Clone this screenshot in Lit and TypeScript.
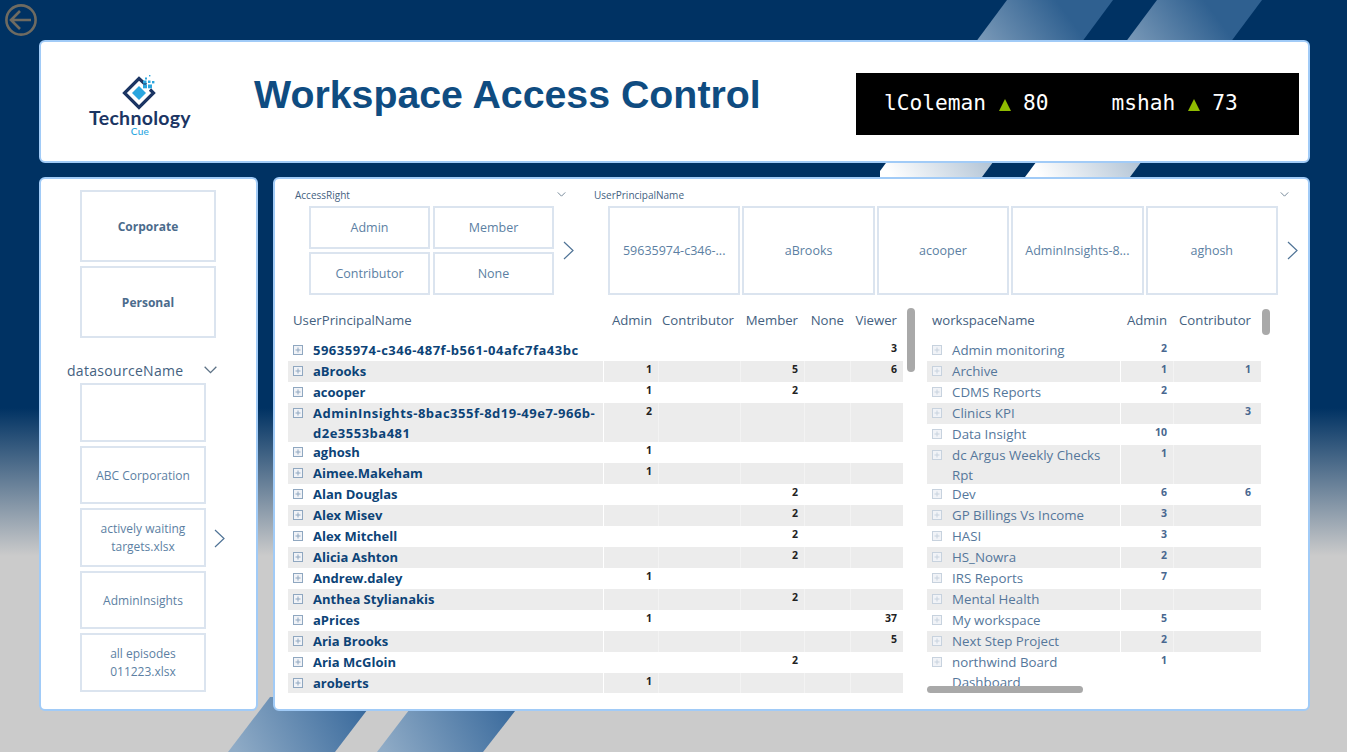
import { LitElement, html, css, svg } from "lit";
import { customElement } from "lit/decorators.js";

type Row = { name: string; vals: string[]; h?: number; hex?: boolean };

const USERS: Row[] = [
  { name: "59635974-c346-487f-b561-04afc7fa43bc", vals: ["", "", "", "", "3"], hex: true },
  { name: "aBrooks", vals: ["1", "", "5", "", "6"] },
  { name: "acooper", vals: ["1", "", "2", "", ""] },
  { name: "AdminInsights-8bac355f-8d19-49e7-966b-d2e3553ba481", vals: ["2", "", "", "", ""], h: 39, hex: true },
  { name: "aghosh", vals: ["1", "", "", "", ""] },
  { name: "Aimee.Makeham", vals: ["1", "", "", "", ""] },
  { name: "Alan Douglas", vals: ["", "", "2", "", ""] },
  { name: "Alex Misev", vals: ["", "", "2", "", ""] },
  { name: "Alex Mitchell", vals: ["", "", "2", "", ""] },
  { name: "Alicia Ashton", vals: ["", "", "2", "", ""] },
  { name: "Andrew.daley", vals: ["1", "", "", "", ""] },
  { name: "Anthea Stylianakis", vals: ["", "", "2", "", ""] },
  { name: "aPrices", vals: ["1", "", "", "", "37"] },
  { name: "Aria Brooks", vals: ["", "", "", "", "5"] },
  { name: "Aria McGloin", vals: ["", "", "2", "", ""] },
  { name: "aroberts", vals: ["1", "", "", "", ""] },
];

const WORKSPACES: Row[] = [
  { name: "Admin monitoring", vals: ["2", ""] },
  { name: "Archive", vals: ["1", "1"] },
  { name: "CDMS Reports", vals: ["2", ""] },
  { name: "Clinics KPI", vals: ["", "3"] },
  { name: "Data Insight", vals: ["10", ""] },
  { name: "dc Argus Weekly Checks Rpt", vals: ["1", ""], h: 39 },
  { name: "Dev", vals: ["6", "6"] },
  { name: "GP Billings Vs Income", vals: ["3", ""] },
  { name: "HASI", vals: ["3", ""] },
  { name: "HS_Nowra", vals: ["2", ""] },
  { name: "IRS Reports", vals: ["7", ""] },
  { name: "Mental Health", vals: ["", ""] },
  { name: "My workspace", vals: ["5", ""] },
  { name: "Next Step Project", vals: ["2", ""] },
  { name: "northwind Board Dashboard", vals: ["1", ""], h: 39 },
];

const chevronDown = (w: number) => html`<svg class="chev" width=${w} height=${Math.round(w * 0.6)} viewBox="0 0 10 6"><path d="M0.5 0.5 L5 5 L9.5 0.5" fill="none" stroke="#5d7286" stroke-width="1"/></svg>`;
const chevronRight = html`<svg class="next" width="11" height="19" viewBox="0 0 11 19"><path d="M1 1 L10 9.5 L1 18" fill="none" stroke="#4f7396" stroke-width="1.2"/></svg>`;
const plusBox = html`<svg class="plus" width="10" height="10" viewBox="0 0 10 10"><rect x="0.5" y="0.5" width="9" height="9" fill="#f1f3f7" stroke="currentColor"/><path d="M2.5 5H7.5M5 2.5V7.5" stroke="currentColor"/></svg>`;

@customElement("app-root")
export class AppRoot extends LitElement {
  static styles = css`
    :host {
      display: block;
      position: relative;
      width: 1347px;
      height: 752px;
      overflow: hidden;
      font-family: "Open Sans", "Noto Sans", sans-serif;
      background: linear-gradient(180deg, #003263 0, #003263 408px, #cbcbcb 556px, #cbcbcb 100%);
    }
    .bg { position: absolute; left: 0; top: 0; }
    .back { position: absolute; left: 5px; top: 4px; }
    .page {
      position: relative;
      box-sizing: border-box;
      height: 752px;
      padding: 40px 37px 0 39px;
      display: grid;
      grid-template-columns: 219px 1037px;
      grid-template-rows: 123px 534px;
      column-gap: 15px;
      row-gap: 14px;
    }
    .panel {
      box-sizing: border-box;
      background: #fff;
      border: 2px solid #a1cbf7;
      border-radius: 6px;
    }
    .header {
      grid-column: 1 / 3;
      display: flex;
      align-items: flex-start;
    }
    .logo {
      width: 198px;
      margin-top: 34px;
      display: flex;
      flex-direction: column;
      align-items: center;
      flex: none;
    }
    .logo svg { display: block; margin-left: 2px; overflow: visible; }
    .logo .t1 {
      font: 700 19.5px/17px Lato, sans-serif;
      color: #1b3563;
      letter-spacing: 0.3px;
      margin-top: -1px;
    }
    .logo .t2 {
      font: 500 10px/10px Lato, sans-serif;
      color: #2aa6df;
      letter-spacing: 0.3px;
    }
    h1 {
      margin: 27px 0 0 15px;
      width: 602px;
      flex: none;
      font: 700 39.3px/50px "Liberation Sans", Arial, sans-serif;
      color: #0f4c81;
      white-space: nowrap;
    }
    .ticker {
      box-sizing: border-box;
      width: 443px;
      height: 62px;
      margin-top: 31px;
      padding: 0 0 2px 28px;
      background: #000;
      color: #fff;
      font: 21.2px/58px "DejaVu Sans Mono", monospace;
      white-space: pre;
      display: flex;
      align-items: center;
    }
    .up {
      width: 0;
      height: 0;
      margin: 3px 12px 0 13px;
      border-left: 6.5px solid transparent;
      border-right: 6.5px solid transparent;
      border-bottom: 12px solid #8fbb00;
    }
    .ticker .gap { width: 63px; }

    .tile {
      box-sizing: border-box;
      border: 2px solid #dbe4ef;
      display: flex;
      align-items: center;
      justify-content: center;
      text-align: center;
      font-size: 12.5px;
      line-height: 17px;
      color: #5c7fa3;
      overflow: hidden;
    }

    .side {
      display: flex;
      flex-direction: column;
      padding: 11px 0 0 39px;
    }
    .side .big {
      width: 136px;
      height: 72px;
      margin-bottom: 4px;
      font-weight: 700;
      font-size: 12px;
      color: #4b6b8c;
    }
    .side .label {
      display: flex;
      align-items: center;
      justify-content: space-between;
      width: 150px;
      margin: 18px 0 0 -13px;
      height: 20px;
      font-size: 14px;
      letter-spacing: 0.3px;
      color: #44617f;
    }
    .side .listwrap { display: flex; align-items: center; margin-top: 3px; }
    .side .list { display: flex; flex-direction: column; gap: 4px; }
    .side .list .tile {
      width: 126px;
      height: 58.5px;
      padding: 2px 8px 0;
      font-size: 12px;
      line-height: 18px;
    }
    .side .next { margin-left: 8px; margin-top: 2px; }

    .main { padding: 8px 0 0 0; display: flex; flex-direction: column; }
    .slicers { display: flex; height: 112px; flex: none; }
    .slicer-a { width: 319px; flex: none; padding-left: 20px; box-sizing: border-box; }
    .slicer-b { flex: none; width: 714px; }
    .slab {
      display: flex;
      align-items: center;
      justify-content: space-between;
      height: 15px;
      font-size: 10px;
      color: #44617f;
    }
    .slicer-a .slab { width: 271px; }
    .slicer-b .slab { width: 695px; }
    .srow { display: flex; align-items: center; }
    .grid4 {
      display: grid;
      grid-template-columns: 121px 121px;
      grid-template-rows: 43px 43px;
      gap: 3px 3px;
      margin: 4px 0 0 14px;
    }
    .grid5 { display: flex; gap: 2px; margin: 4px 0 0 14px; }
    .grid5 .tile { width: 132.4px; height: 89px; white-space: nowrap; }
    .srow .next { flex: none; margin: 4px 0 0 9px; }

    .tables { position: relative; display: flex; margin-top: 1px; }
    .tbl { position: relative; flex: none; }
    .tbl.users { width: 615px; margin-left: 13px; }
    .tbl.spaces { width: 334px; margin-left: 24px; }
    .thead {
      height: 40px;
      display: grid;
      align-items: start;
      font-size: 13.2px;
      line-height: 17px;
      color: #44617f;
      padding-top: 12px;
      box-sizing: border-box;
    }
    .thead > div { white-space: nowrap; text-align: right; padding-right: 6px; }
    .thead > div:first-child { text-align: left; padding-left: 5px; padding-right: 0; }
    .spaces .thead > div:last-child { padding-right: 0; }
    .body { overflow: hidden; }
    .row { display: grid; height: 21px; }
    .row.tall { height: 39px; }
    .row:nth-child(even) { background: #ececec; }
    .row:nth-child(even) .n { box-shadow: inset 1px 0 0 #f3f3f3; }
    .row:nth-child(even) .cell + .n { box-shadow: inset 1px 0 0 #fff; }
    .users .body { height: 353px; }
    .spaces .body { height: 346px; }
    .users .thead, .users .row { grid-template-columns: 315px 55px 82px 64px 46px 53px; }
    .spaces .thead, .spaces .row { grid-template-columns: 193px 53px 84px 4px; }
    .cell {
      display: flex;
      align-items: flex-start;
      padding: 0 0 0 5px;
      line-height: 19.5px;
      overflow: hidden;
    }
    .cell span { padding-top: 1px; }
    .cell .plus { flex: none; margin: 5px 10px 0 0; }
    .users .cell { font-size: 13px; font-weight: 700; color: #0c4377; }
    .users .cell.hex { letter-spacing: 0.5px; }
    .users .cell .plus { color: #8fa7c0; }
    .spaces .cell { font-size: 13.3px; color: #55779b; }
    .spaces .cell .plus { color: #c7d2de; }
    .n {
      text-align: right;
      font-size: 10.5px;
      font-weight: 700;
      line-height: 16px;
      padding-right: 6px;
      white-space: nowrap;
    }
    .users .n { color: #222; }
    .spaces .n { color: #48678f; }
    .sb {
      position: absolute;
      background: #a9a9a9;
      border-radius: 4px;
    }
    .sb.u { left: 632px; top: 8px; width: 8px; height: 64px; }
    .sb.s { left: 335px; top: 9px; width: 8px; height: 26px; }
    .sb.h { left: 0; top: 386px; width: 156px; height: 7px; }
  `;

  private stripe(id: string, pts: string) {
    return svg`<polygon points=${pts} fill="url(#${id})"/>`;
  }

  private table(cls: string, title: string, heads: string[], rows: Row[]) {
    return html`<div class="tbl ${cls}">
      <div class="thead">
        <div>${title}</div>
        ${heads.map((h) => html`<div>${h}</div>`)}
        ${cls === "spaces" ? html`<div></div>` : ""}
      </div>
      <div class="body">
        ${rows.map(
          (r) => html`<div class="row ${r.h ? "tall" : ""}">
            <div class="cell ${r.hex ? "hex" : ""}">${plusBox}<span>${r.name}</span></div>
            ${r.vals.map((v) => html`<div class="n">${v}</div>`)}
            ${cls === "spaces" ? html`<div></div>` : ""}
          </div>`
        )}
      </div>
      ${cls === "spaces" ? html`<div class="sb s"></div><div class="sb h"></div>` : ""}
    </div>`;
  }

  render() {
    return html`
      <svg class="bg" width="1347" height="752" viewBox="0 0 1347 752">
        <defs>
          <linearGradient id="g1" gradientUnits="userSpaceOnUse" x1="1085" y1="39" x2="895" y2="181">
            <stop offset="0" stop-color="#2f6090"/><stop offset="1" stop-color="#ffffff"/>
          </linearGradient>
          <linearGradient id="g2" gradientUnits="userSpaceOnUse" x1="1233" y1="39" x2="1043" y2="181">
            <stop offset="0" stop-color="#2f6090"/><stop offset="1" stop-color="#ffffff"/>
          </linearGradient>
          <linearGradient id="g3" gradientUnits="userSpaceOnUse" x1="365" y1="700" x2="240" y2="760">
            <stop offset="0" stop-color="#37689b"/><stop offset="1" stop-color="#8fabc6"/>
          </linearGradient>
          <linearGradient id="g4" gradientUnits="userSpaceOnUse" x1="513" y1="700" x2="388" y2="760">
            <stop offset="0" stop-color="#37689b"/><stop offset="1" stop-color="#8fabc6"/>
          </linearGradient>
        </defs>
        ${this.stripe("g1", "1007,0 1113,0 982,177 880,177 880,171")}
        ${this.stripe("g2", "1157,0 1262,0 1130,177 1025,177")}
        ${this.stripe("g3", "270,697 377,697 335,752 228,752")}
        ${this.stripe("g4", "419,697 526,697 483,752 377,752")}
      </svg>
      <svg class="back" width="32" height="32" viewBox="0 0 32 32">
        <circle cx="16" cy="16" r="14.6" fill="none" stroke="#6f6b61" stroke-width="2.6"/>
        <path d="M26 16H6M15 7L6 16L15 25" fill="none" stroke="#6f6b61" stroke-width="2.6"/>
      </svg>
      <div class="page">
        <div class="panel header">
          <div class="logo">
            <svg width="44" height="34" viewBox="0 0 44 34">
              <path d="M27 9 L20 2.5 L5.5 17 L20 31.5 L34.5 17 L31 13.5" fill="none" stroke="#1b3563" stroke-width="3.2"/>
              <path d="M20 10 L27 17 L20 24 L13 17 Z" fill="#2aa6df"/>
              <g fill="#2aa6df">
                <rect x="24" y="8.5" width="4" height="3.8"/><rect x="29" y="8.5" width="4" height="3.8"/>
                <rect x="24" y="4.5" width="3.5" height="3"/><rect x="29" y="4.5" width="2.5" height="2.5"/>
                <rect x="33" y="5" width="2.4" height="2.4"/><rect x="26" y="1.5" width="2" height="2"/>
                <rect x="30" y="-1" width="1.4" height="1.4"/>
              </g>
            </svg>
            <div class="t1">Technology</div>
            <div class="t2">Cue</div>
          </div>
          <h1>Workspace Access Control</h1>
          <div class="ticker">
            <span>lColeman</span><i class="up"></i><span>80</span><span class="gap"></span>
            <span>mshah</span><i class="up"></i><span>73</span>
          </div>
        </div>
        <div class="panel side">
          <div class="tile big">Corporate</div>
          <div class="tile big">Personal</div>
          <div class="label"><span>datasourceName</span>${chevronDown(13)}</div>
          <div class="listwrap">
            <div class="list">
              <div class="tile"></div>
              <div class="tile">ABC Corporation</div>
              <div class="tile">actively waiting targets.xlsx</div>
              <div class="tile">AdminInsights</div>
              <div class="tile">all episodes 011223.xlsx</div>
            </div>
            ${chevronRight}
          </div>
        </div>
        <div class="panel main">
          <div class="slicers">
            <div class="slicer-a">
              <div class="slab"><span>AccessRight</span>${chevronDown(9)}</div>
              <div class="srow">
                <div class="grid4">
                  <div class="tile">Admin</div><div class="tile">Member</div>
                  <div class="tile">Contributor</div><div class="tile">None</div>
                </div>
                ${chevronRight}
              </div>
            </div>
            <div class="slicer-b">
              <div class="slab"><span>UserPrincipalName</span>${chevronDown(9)}</div>
              <div class="srow">
                <div class="grid5">
                  <div class="tile">59635974-c346-...</div>
                  <div class="tile">aBrooks</div>
                  <div class="tile">acooper</div>
                  <div class="tile">AdminInsights-8...</div>
                  <div class="tile">aghosh</div>
                </div>
                ${chevronRight}
              </div>
            </div>
          </div>
          <div class="tables">
            ${this.table("users", "UserPrincipalName", ["Admin", "Contributor", "Member", "None", "Viewer"], USERS)}
            ${this.table("spaces", "workspaceName", ["Admin", "Contributor"], WORKSPACES)}
            <div class="sb u"></div>
          </div>
        </div>
      </div>
    `;
  }
}
